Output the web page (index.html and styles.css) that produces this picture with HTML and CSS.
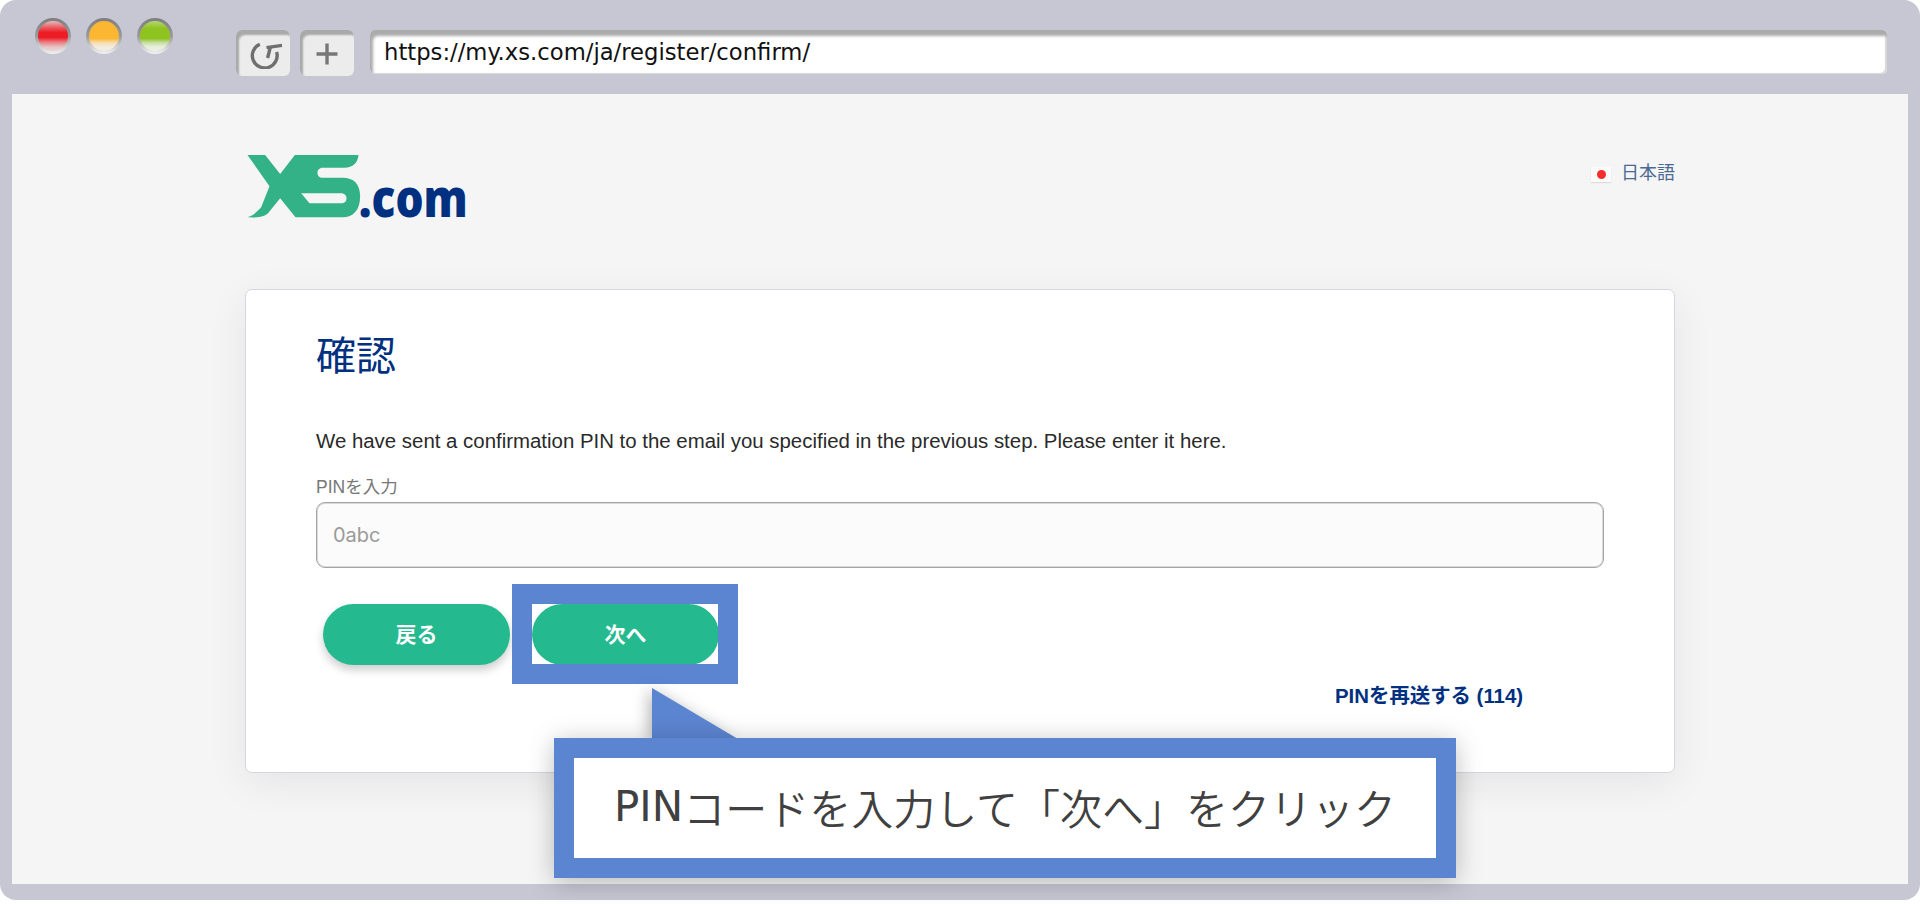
FILE: index.html
```html
<!DOCTYPE html>
<html lang="ja">
<head>
  <meta charset="UTF-8">
  <title>XS.com confirm</title>
  <link rel="stylesheet" href="styles.css">
</head>
<body>
  <div class="frame">
    <div class="toolbar">
      <div class="lights">
        <span class="light red"></span>
        <span class="light orange"></span>
        <span class="light green"></span>
      </div>
      <div class="tool tool-reload">
        <svg width="36" height="30" viewBox="0 0 36 30" fill="none" stroke="#6f6f6f" stroke-width="3.4">
          <path d="M12.8 5.2 A12.4 12.4 0 1 0 29.6 13"/>
          <path d="M19.5 8.6 L35 6.4" stroke-width="3.4"/>
          <path d="M23.5 7.7 L20.6 19" stroke-width="3.4"/>
        </svg>
      </div>
      <div class="tool">
        <svg width="24" height="24" viewBox="0 0 24 24" fill="none" stroke="#777" stroke-width="3.4">
          <path d="M12 1.5 V22.5 M1.5 12 H22.5"/>
        </svg>
      </div>
      <div class="urlbar">https://my.xs.com/ja/register/confirm/</div>
    </div>

    <div class="content">
      <div class="site-head">
        <svg class="logo" width="222" height="80" viewBox="54 48 663 240">
          <path fill="#34b287" fill-rule="evenodd" d="M54 48 H107 L152 105 L196 48 H387 C385 72 370 86 345 86 H279 C270 86 264 93 264 101 C264 110 270 116 279 116 H340 C372 116 392 134 392 172 C392 215 370 235 340 235 H198 L152 178 L118 220 C108 232 92 237 54 235 C75 228 85 215 95 205 L120 142 Z M215 163 H335 C345 163 351 170 351 178 C351 187 345 193 335 193 H240 Z"/>
          <text class="logo-com" transform="translate(388 235) scale(0.85 1)">.com</text>
        </svg>
        <div class="lang">
          <span class="flag"><span class="flag-dot"></span></span>
          <span>日本語</span>
        </div>
      </div>

      <div class="card">
        <h1>確認</h1>
        <p class="intro">We have sent a confirmation PIN to the email you specified in the previous step. Please enter it here.</p>
        <label class="field-label" for="pin">PINを入力</label>
        <input class="pin-input" id="pin" type="text" placeholder="0abc">
        <div class="actions">
          <button class="btn" type="button">戻る</button>
          <button class="btn btn-next" type="button">次へ</button>
        </div>
        <div class="resend"><a href="#">PINを再送する (114)</a></div>
      </div>
    </div>

    <div class="highlight"></div>
    <div class="callout">
      <svg class="callout-tip" width="86" height="51" viewBox="0 0 86 51"><path d="M0 0 L86 51 H0 Z" fill="#5c85d1"/></svg>
      <div class="callout-box"><span class="callout-latin">PIN</span>コードを入力して「次へ」をクリック</div>
    </div>
  </div>
</body>
</html>
```

FILE: styles.css
```css
* {
  box-sizing: border-box;
}
html, body {
  margin: 0;
  height: 904px;
  overflow: hidden;
  background: #fff;
}
body {
  font-family: "Liberation Sans", "Noto Sans CJK JP", sans-serif;
}
.frame {
  position: relative;
  height: 900px;
  background: #c7c7d4;
  border-radius: 16px;
  padding: 0 12px 16px;
  display: flex;
  flex-direction: column;
}
.toolbar {
  height: 94px;
  display: flex;
  align-items: flex-start;
  padding: 18px 21px 0 23px;
}
.lights {
  display: flex;
  gap: 15px;
  margin-right: 63px;
}
.light {
  width: 36px;
  height: 36px;
  padding: 3px;
  border-radius: 50%;
  background: linear-gradient(#7d7d80, #9a9a9c 50%, #f2f2f2);
}
.light::before {
  content: "";
  display: block;
  width: 30px;
  height: 30px;
  border-radius: 50%;
}
.red::before {
  background: linear-gradient(#e6bcbc 0, #e95a60 22%, #ee1c25 38%, #ee1c25 55%, #e8868a 72%, #e8c8c8 88%, #e9d6d6 100%);
}
.orange::before {
  background: linear-gradient(#fbb731 0, #fbb731 58%, #f7dcaa 72%, #f3ebdd 85%, #f2efe8 100%);
}
.green::before {
  background: linear-gradient(#b3d672 0, #8fc31f 25%, #8fc31f 58%, #c5dea0 72%, #e4eed8 85%, #eef2ea 100%);
}
.tool {
  width: 54px;
  height: 46px;
  margin-top: 12px;
  margin-right: 10px;
  border-radius: 6px;
  background: #ececec;
  box-shadow: inset 3px 5px 2px #a9a9a9;
  display: flex;
  align-items: center;
  justify-content: center;
  padding: 2px 0 0 0;
}
.tool-reload {
  padding-left: 3px;
}
.urlbar {
  flex: 1;
  height: 44px;
  margin-top: 12px;
  margin-left: 6px;
  padding: 8px 0 0 14px;
  border-radius: 5px;
  background: #fff;
  box-shadow: inset 3px 6px 3px #ababab, inset -2px -1px 1px #d8d8d8;
  font-family: "DejaVu Sans", sans-serif;
  font-size: 22.7px;
  color: #111;
  line-height: 28px;
}
.content {
  flex: 1;
  background: #f5f5f5;
  padding: 0 233px;
}
.site-head {
  height: 195px;
  display: flex;
  justify-content: space-between;
  align-items: flex-start;
  padding: 61px 0 0 2px;
}
.logo-com {
  font-family: "Open Sans", sans-serif;
  font-weight: 800;
  font-size: 156px;
  fill: #00307f;
}
.lang {
  display: flex;
  align-items: center;
  gap: 10px;
  margin-top: 3px;
  font-size: 18px;
  color: #4a6a94;
  line-height: 30px;
}
.flag {
  width: 20px;
  height: 15px;
  margin-top: 3px;
  background: #fbfbfb;
  box-shadow: 0 1px 1px #ddd;
  display: flex;
  align-items: center;
  justify-content: center;
}
.flag-dot {
  width: 9px;
  height: 9px;
  border-radius: 50%;
  background: #fa2d2d;
}
.card {
  background: #fff;
  border: 1px solid #d5d7dd;
  border-radius: 7px;
  height: 484px;
  padding: 36px 70px 0;
  box-shadow: 0 10px 40px rgba(0, 0, 0, 0.07);
}
.card h1 {
  margin: 0;
  font-size: 40px;
  font-weight: 400;
  line-height: 60px;
  color: #00307f;
}
.intro {
  margin: 40px 0 0;
  font-size: 20.42px;
  line-height: 30px;
  color: #2a2a2a;
}
.field-label {
  display: block;
  margin-top: 19px;
  font-size: 17.5px;
  line-height: 24px;
  color: #777;
}
.pin-input {
  display: block;
  width: 100%;
  height: 66px;
  margin-top: 3px;
  padding: 0 16px;
  border: 1px solid #a5a5a5;
  border-radius: 9px;
  background: #fbfbfb;
  box-shadow: inset 0 0 0 1px #d8d8d8;
  font-family: Inter, sans-serif;
  font-size: 20px;
}
.pin-input::placeholder {
  color: #9a9a9a;
  opacity: 1;
}
.actions {
  display: flex;
  gap: 22px;
  padding-left: 7px;
  margin-top: 36px;
}
.btn {
  width: 187px;
  height: 61px;
  padding: 0 0 4px;
  border: 0;
  border-radius: 31px;
  background: #25b98f;
  color: #fff;
  font-family: "Noto Sans CJK JP", sans-serif;
  font-size: 21px;
  font-weight: 700;
  box-shadow: 0 5px 10px rgba(0, 0, 0, 0.2);
}
.btn-next {
  box-shadow: none;
}
.resend {
  margin-top: 17px;
  padding-left: 1019px;
  font-size: 20.4px;
  font-weight: 700;
  line-height: 28px;
  white-space: nowrap;
}
.resend a {
  color: #00307f;
  text-decoration: none;
}
/* annotations painted over the screenshot */
.highlight {
  position: absolute;
  left: 512px;
  top: 584px;
  width: 226px;
  height: 100px;
  border: 20px solid #5c85d1;
}
.callout {
  position: absolute;
  left: 554px;
  top: 738px;
  width: 902px;
  height: 140px;
}
.callout-tip {
  position: absolute;
  left: 98px;
  top: -50px;
  filter: drop-shadow(-3px 2px 8px rgba(0, 0, 0, 0.3));
}
.callout-box {
  position: relative;
  height: 100%;
  padding-bottom: 4px;
  border: 20px solid #5c85d1;
  background: #fff;
  box-shadow: 0 4px 24px rgba(0, 0, 0, 0.25);
  display: flex;
  align-items: center;
  justify-content: center;
  font-family: "Noto Sans CJK JP", sans-serif;
  font-size: 42px;
  font-weight: 350;
  color: #404040;
  white-space: nowrap;
}
.callout-latin {
  font-family: "DejaVu Sans", sans-serif;
  font-weight: 400;
}
```
